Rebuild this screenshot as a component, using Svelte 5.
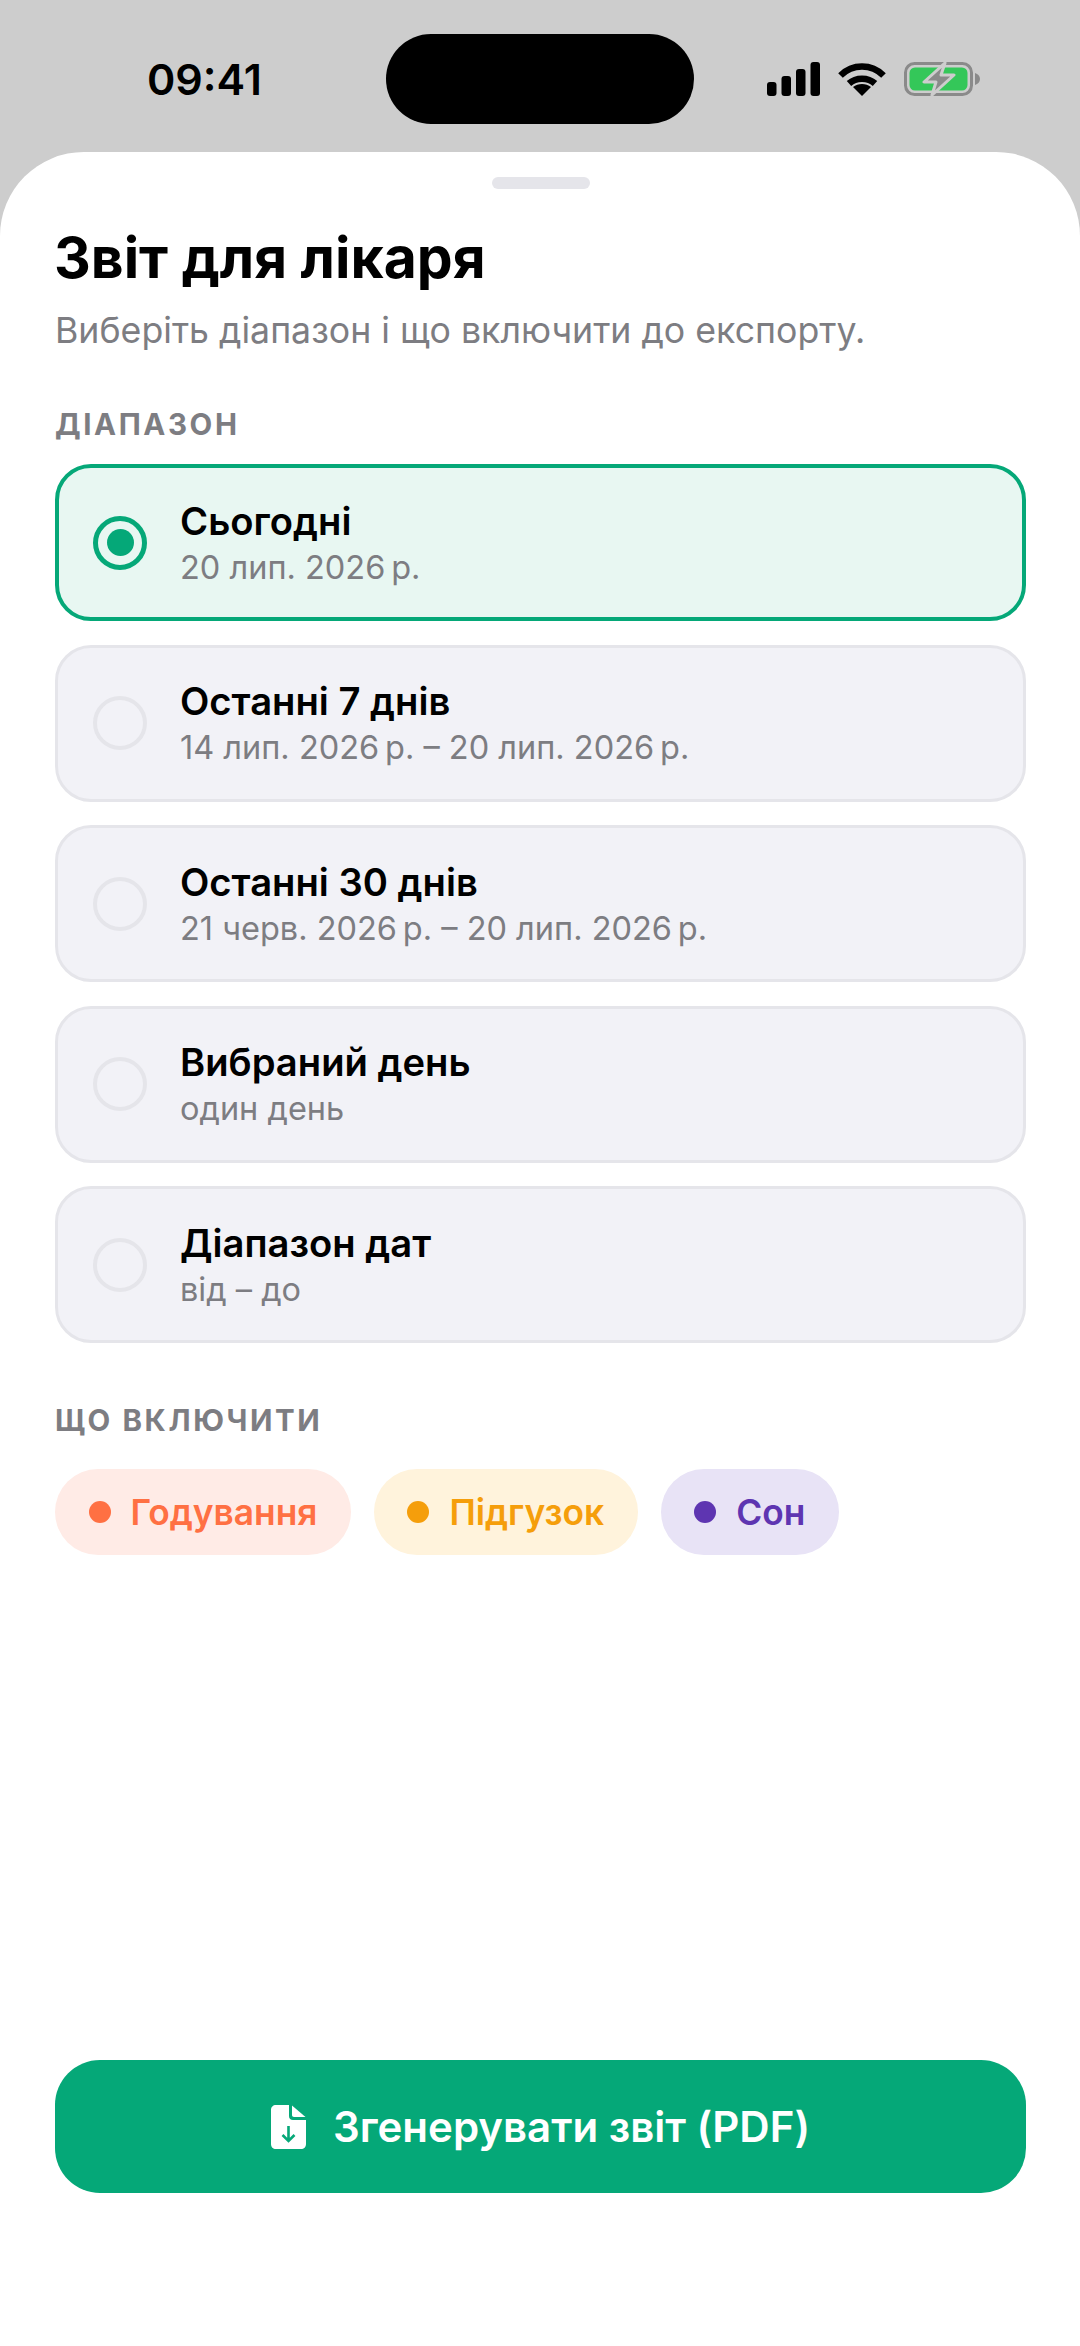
<script>
    const ranges = [
        { title: 'Сьогодні', sub: '20 лип. 2026\u2009р.', selected: true },
        { title: 'Останні 7 днів', sub: '14 лип. 2026\u2009р. – 20 лип. 2026\u2009р.' },
        { title: 'Останні 30 днів', sub: '21 черв. 2026\u2009р. – 20 лип. 2026\u2009р.' },
        { title: 'Вибраний день', sub: 'один день' },
        { title: 'Діапазон дат', sub: 'від – до' }
    ];

    const chips = [
        { label: 'Годування', cls: 'feed' },
        { label: 'Підгузок', cls: 'diaper' },
        { label: 'Сон', cls: 'sleep' }
    ];
</script>

<div class="screen">
    <header class="status">
        <span class="time">09:41</span>
        <div class="island"></div>
        <div class="icons">
            <svg width="53" height="34" viewBox="0 0 53 34" fill="#000">
                <rect x="0" y="20" width="9.5" height="14" rx="3" />
                <rect x="14.5" y="14" width="9.5" height="20" rx="3" />
                <rect x="29" y="7" width="9.5" height="27" rx="3" />
                <rect x="43.5" y="0" width="9.5" height="34" rx="3" />
            </svg>
            <svg width="48" height="34" viewBox="0 0 48 34" fill="none" stroke="#000" stroke-width="6.5">
                <path d="M2.5 13.5C14.5 1.5 33.5 1.5 45.5 13.5" />
                <path d="M11 21.5C18 15 30 15 37 21.5" />
                <path d="M24 34L15 25C20 21 28 21 33 25Z" fill="#000" stroke="none" />
            </svg>
            <svg width="76" height="34" viewBox="0 0 76 34">
                <rect x="1.5" y="1.5" width="66" height="31" rx="9" fill="none" stroke="#8a8a8a" stroke-width="3" />
                <rect x="5.5" y="5.5" width="58" height="23" rx="5.5" fill="#34c759" />
                <path d="M71 11c3 1 5 3 5 6s-2 5-5 6z" fill="#8a8a8a" />
                <path d="M41 1L20 20H32L28 33L50 13H37Z" fill="#8a8a8a" stroke="#cdcdcd" stroke-width="3" stroke-linejoin="round" />
            </svg>
        </div>
    </header>

    <main class="sheet">
        <div class="handle"></div>
        <h1>Звіт для лікаря</h1>
        <p class="lead">Виберіть діапазон і що включити до експорту.</p>

        <h2 class="section">ДІАПАЗОН</h2>
        <div class="ranges">
            {#each ranges as r}
                <div class="range" class:selected={r.selected}>
                    <span class="radio"></span>
                    <div class="range-text">
                        <div class="range-title">{r.title}</div>
                        <div class="range-sub">{r.sub}</div>
                    </div>
                </div>
            {/each}
        </div>

        <h2 class="section second">ЩО ВКЛЮЧИТИ</h2>
        <div class="chips">
            {#each chips as c}
                <div class="chip {c.cls}">
                    <span class="dot"></span>
                    {c.label}
                </div>
            {/each}
        </div>

        <button class="generate">
            <svg width="35" height="44" viewBox="0 0 35 44">
                <path d="M5 0H18V11C18 13.5 19.5 15 22 15H35V39C35 42 33 44 30 44H5C2 44 0 42 0 39V5C0 2 2 0 5 0Z" fill="#fff" />
                <path d="M21 0.5L34.5 12H23C21.8 12 21 11.2 21 10Z" fill="#fff" />
                <path d="M17.5 21V36M11.5 30L17.5 36L23.5 30" fill="none" stroke="#05a878" stroke-width="2.6" />
            </svg>
            Згенерувати звіт (PDF)
        </button>
    </main>
</div>

<style>
    :global(body) {
        margin: 0;
        background: #cdcdcd;
    }

    .screen {
        height: 2346px;
        display: flex;
        flex-direction: column;
        font-family: Inter, "Noto Sans", sans-serif;
        color: #000;
    }

    .status {
        height: 152px;
        box-sizing: border-box;
        padding: 34px 100px 0 147px;
        display: flex;
        align-items: flex-start;
        flex-shrink: 0;
    }

    .time {
        width: 239px;
        font-size: 43px;
        line-height: 90px;
        font-weight: 600;
    }

    .island {
        width: 308px;
        height: 90px;
        border-radius: 45px;
        background: #000;
    }

    .icons {
        margin-left: auto;
        margin-top: 28px;
        display: flex;
        gap: 18px;
    }

    .icons svg {
        display: block;
    }

    .sheet {
        flex: 1;
        background: #fff;
        border-radius: 84px 84px 0 0;
        padding: 25px 54px 153px 55px;
        display: flex;
        flex-direction: column;
    }

    .handle {
        width: 98px;
        height: 12px;
        border-radius: 6px;
        background: #e5e5ea;
        align-self: center;
    }

    h1 {
        margin: 36px 0 0 -1px;
        font-size: 57px;
        line-height: 66px;
        font-weight: 700;
    }

    .lead {
        margin: 17px 0 0;
        font-size: 35.7px;
        line-height: 44px;
        color: #7d7d82;
    }

    .section {
        margin: 54px 0 0;
        font-size: 29.5px;
        line-height: 36px;
        font-weight: 700;
        letter-spacing: 2.6px;
        color: #7d7d82;
    }

    .section.second {
        margin-top: 59px;
    }

    .ranges {
        margin-top: 22px;
        display: flex;
        flex-direction: column;
        gap: 23.5px;
    }

    .range {
        height: 157px;
        box-sizing: border-box;
        display: flex;
        align-items: center;
        gap: 33px;
        padding-left: 35px;
        border: 3px solid #e5e5ea;
        border-radius: 36px;
        background: #f2f2f7;
    }

    .range.selected {
        border: 4px solid #05a878;
        padding-left: 34px;
        background: #e8f7f2;
    }

    .radio {
        width: 54px;
        height: 54px;
        box-sizing: border-box;
        border: 4px solid #e5e5ea;
        border-radius: 50%;
        display: flex;
        align-items: center;
        justify-content: center;
        flex-shrink: 0;
    }

    .selected .radio {
        border: 5px solid #05a878;
    }

    .selected .radio::after {
        content: "";
        width: 27px;
        height: 27px;
        border-radius: 50%;
        background: #05a878;
    }

    .range-title {
        font-size: 38.2px;
        line-height: 46px;
        font-weight: 600;
    }

    .range-sub {
        margin-top: 4px;
        font-size: 32.5px;
        line-height: 40px;
        color: #7d7d82;
    }

    .chips {
        margin-top: 31px;
        display: flex;
        gap: 23px;
    }

    .chip {
        height: 86px;
        box-sizing: border-box;
        padding: 0 33.5px;
        border-radius: 43px;
        display: flex;
        align-items: center;
        gap: 20px;
        font-size: 35.3px;
        font-weight: 600;
    }

    .dot {
        width: 22px;
        height: 22px;
        border-radius: 50%;
        background: currentColor;
    }

    .feed {
        background: #ffebe6;
        color: #ff7043;
    }

    .diaper {
        background: #fff3dc;
        color: #f59e0b;
    }

    .sleep {
        background: #e8e3f6;
        color: #5e35b1;
    }

    .generate {
        margin-top: auto;
        height: 133px;
        border: none;
        border-radius: 45px;
        background: #05a878;
        color: #fff;
        font: 600 42px Inter, "Noto Sans", sans-serif;
        display: flex;
        align-items: center;
        justify-content: center;
        gap: 27px;
    }
</style>
